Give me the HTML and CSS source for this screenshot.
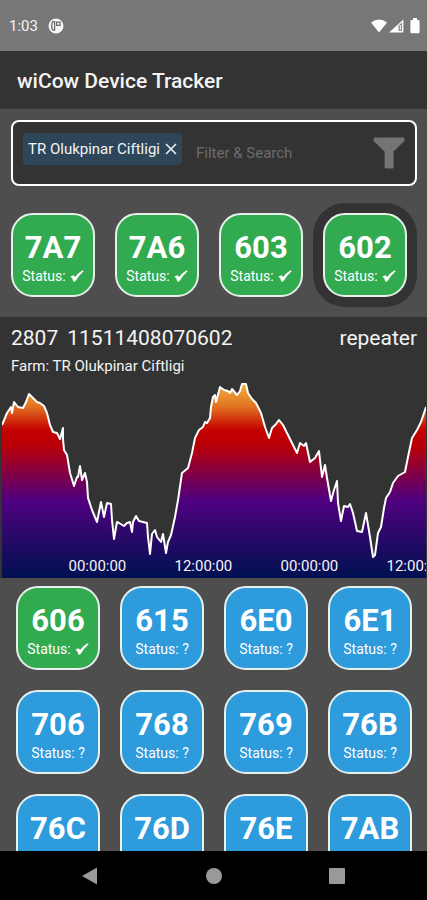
FILE: index.html
```html
<!DOCTYPE html>
<html lang="en">
<head>
  <meta charset="UTF-8" />
  <meta name="viewport" content="width=device-width, initial-scale=1" />
  <title>wiCow Device Tracker</title>
  <link rel="stylesheet" href="styles.css">
</head>
<body>
  <!-- Shared check mark -->
  <svg class="defs" aria-hidden="true">
    <symbol id="check" viewBox="0 0 14 12">
      <path d="M.6 6.6Q2.2 5.2 3.6 5.4 4.6 5.8 5 7 8.4 2.6 12.6.2L13.6 1.2Q9.2 5 6 10.6 5 11.8 3.4 11.8 2.4 8 .6 6.6Z" fill="currentColor"/>
    </symbol>
  </svg>

  <!-- Phone status bar -->
  <div class="status-bar">
    <span class="clock">1:03</span>
    <svg class="app-icon" width="16" height="16" viewBox="0 0 16 16">
      <circle cx="8" cy="8" r="7.5" fill="#f5f5f5"/>
      <path d="M6.6 3.6H4.8Q3.6 5.5 3.6 8T5 12.2H6.6ZM8.6 4.2H12V7.4H8.6Z" fill="none" stroke="#6c6c6c" stroke-width="1.3"/>
    </svg>
    <div class="signals">
      <svg width="16" height="14" viewBox="0 0 16 14"><path d="M0 3.6Q8-2.6 16 3.6L8 13.6Z" fill="#fff"/></svg>
      <svg width="15" height="14" viewBox="0 0 15 14">
        <path d="M0 13.6 14.4.4V13.6Z" fill="#fff"/>
        <path d="M9.4 6.6 13 3.4V12H9.4Z" fill="#8c8c8c"/>
        <path d="M11.3 6V11" stroke="#fff"/>
      </svg>
      <svg class="battery" width="10" height="16" viewBox="0 0 10 16"><path d="M3 0H7V2H8.4Q9.6 2 9.6 3.2V14Q9.6 15.2 8.4 15.2H1.6Q.4 15.2.4 14V3.2Q.4 2 1.6 2H3Z" fill="#fff"/></svg>
    </div>
  </div>

  <header class="title-bar">
    <h1>wiCow Device Tracker</h1>
  </header>

  <main>
    <div class="search">
      <button class="chip" type="button" aria-label="Remove TR Olukpinar Ciftligi">
        TR Olukpinar Ciftligi
        <svg width="12" height="12" viewBox="0 0 12 12"><path d="M1 1 11 11M11 1 1 11" stroke="currentColor" stroke-width="1.5"/></svg>
      </button>
      <input type="text" placeholder="Filter &amp; Search" aria-label="Filter and search">
      <button class="filter" type="button" aria-label="Filter">
        <svg width="32" height="32" viewBox="0 0 32 32"><path d="M.6 1.6Q.6.6 1.6.6H30.4Q31.4.6 31.4 1.6V4L20.6 14.6V30.4Q20.6 31.4 19.6 31.4H12.6Q11.6 31.4 11.6 30.4V14.6L.6 4Z" fill="#747474"/></svg>
      </button>
    </div>

    <div class="devices nearby">
      <button class="device ok"><b>7A7</b><span>Status: <svg><use href="#check"/></svg></span></button>
      <button class="device ok"><b>7A6</b><span>Status: <svg><use href="#check"/></svg></span></button>
      <button class="device ok"><b>603</b><span>Status: <svg><use href="#check"/></svg></span></button>
      <button class="device ok selected"><b>602</b><span>Status: <svg><use href="#check"/></svg></span></button>
    </div>

    <!-- Selected device -->
    <section class="detail">
      <div class="detail-head">
        <span>2807</span>
        <span>11511408070602</span>
        <span class="role">repeater</span>
      </div>
      <div class="farm">Farm: TR Olukpinar Ciftligi</div>
      <div class="chart">
        <svg class="plot" viewBox="0 0 424 200" preserveAspectRatio="none">
          <defs>
            <linearGradient id="heat" gradientUnits="userSpaceOnUse" x1="0" y1="0" x2="0" y2="200">
              <stop offset="0.03" stop-color="#f0b040"/>
              <stop offset="0.14" stop-color="#e27522"/>
              <stop offset="0.26" stop-color="#c40000"/>
              <stop offset="0.34" stop-color="#b80008"/>
              <stop offset="0.61" stop-color="#500080"/>
              <stop offset="0.82" stop-color="#240a66"/>
              <stop offset="1" stop-color="#001050"/>
            </linearGradient>
          </defs>
          <path class="area" fill="url(#heat)"/>
          <path class="line"/>
        </svg>
        <div class="hours">
          <span>00:00:00</span>
          <span>12:00:00</span>
          <span>00:00:00</span>
          <span>12:00:00</span>
        </div>
      </div>
    </section>

    <div class="devices all">
      <button class="device ok"><b>606</b><span>Status: <svg><use href="#check"/></svg></span></button>
      <button class="device"><b>615</b><span>Status: ?</span></button>
      <button class="device"><b>6E0</b><span>Status: ?</span></button>
      <button class="device"><b>6E1</b><span>Status: ?</span></button>
      <button class="device"><b>706</b><span>Status: ?</span></button>
      <button class="device"><b>768</b><span>Status: ?</span></button>
      <button class="device"><b>769</b><span>Status: ?</span></button>
      <button class="device"><b>76B</b><span>Status: ?</span></button>
      <button class="device"><b>76C</b><span>Status: ?</span></button>
      <button class="device"><b>76D</b><span>Status: ?</span></button>
      <button class="device"><b>76E</b><span>Status: ?</span></button>
      <button class="device"><b>7AB</b><span>Status: ?</span></button>
    </div>
  </main>

  <!-- Phone navigation -->
  <nav class="nav-bar">
    <button type="button" aria-label="Back"><svg width="18" height="18" viewBox="0 0 18 18"><path d="M0 9 15 .6V17.4Z"/></svg></button>
    <button type="button" aria-label="Home"><svg width="18" height="18" viewBox="0 0 18 18"><circle cx="9" cy="9" r="8"/></svg></button>
    <button type="button" aria-label="Recent apps"><svg width="18" height="18" viewBox="0 0 18 18"><rect x="1" y="1" width="16" height="16" rx="1"/></svg></button>
  </nav>

  <script>
    // Samples as x,y pairs
    const samples = `0,47 5,35 9,29 10,35 12,24 16,29 21,30 24,24 27,16 31,20 35,24 38,25 42,28 45,35 48,47
      51,54 55,55 58,61 61,50 61,61 62,72 65,77 68,95 72,108 75,99 76,99 78,88 80,102 83,95 85,104 86,120
      90,132 95,144 97,134 99,124 102,139 105,125 109,126 110,142 112,161 115,144 117,145 122,148 125,145
      128,144 130,154 131,144 134,138 137,143 145,145 146,159 148,176 150,156 153,152 155,159 159,164
      161,156 164,175 166,164 169,157 173,139 176,122 180,95 186,90 190,75 193,60 197,52 201,49 203,44
      205,45 208,40 209,29 211,19 213,17 214,24 218,9 222,12 226,13 228,15 230,11 235,17 238,13 240,6
      244,6 246,15 250,21 254,25 259,35 263,49 267,60 270,50 274,46 277,42 281,47 285,55 289,63 295,75
      298,65 302,68 304,65 308,84 313,80 317,73 320,99 323,87 325,100 329,123 332,112 335,103 336,125
      339,143 342,128 346,129 348,126 351,135 355,153 360,154 364,135 368,159 371,179 373,177 376,155
      379,149 382,130 384,120 388,114 391,105 396,98 403,94 406,79 410,60 415,52 419,44 424,29`
      .trim().split(/\s+/);
    const line = 'M' + samples.join('L');
    document.querySelector('.line').setAttribute('d', line);
    document.querySelector('.area').setAttribute('d', line + 'V200H0Z');
  </script>
</body>
</html>
```
FILE: styles.css
```css
:root {
  --bg: #4e4e4e;
  --panel: #333;
  --green: #32ab50;
  --blue: #2d9bdc;
  --text: #f4f4f4;
}

* { box-sizing: border-box; margin: 0; padding: 0; }

body {
  height: 100vh;
  display: flex;
  flex-direction: column;
  overflow: hidden;
  background: var(--bg);
  color: var(--text);
  font-family: Roboto, sans-serif;
}

button {
  border: 0;
  background: none;
  color: inherit;
  font-family: inherit;
  cursor: pointer;
}

svg { display: block; flex: none; }
.defs { position: absolute; width: 0; height: 0; }

/* Status bar */
.status-bar {
  flex: none;
  display: flex;
  align-items: center;
  height: 51px;
  padding: 1px 7px 0 9px;
  background: #777;
  font-size: 15px;
}
.app-icon { margin-left: 10px; }
.signals {
  display: flex;
  align-items: center;
  gap: 2px;
  margin-left: auto;
}
.battery { margin-left: 4px; }

/* Title */
.title-bar {
  flex: none;
  padding: 18px 17px 16px;
  background: var(--panel);
}
.title-bar h1 {
  font-size: 21px;
  font-weight: 500;
  line-height: 24px;
}

main {
  flex: 1;
  min-height: 0;
  overflow: hidden;
}

/* Search box */
.search {
  display: flex;
  align-items: center;
  height: 66px;
  margin: 11px 10px 0 11px;
  padding: 0 10px;
  border: 2px solid #fff;
  border-radius: 8px;
  background: var(--panel);
}
.chip {
  display: flex;
  align-items: center;
  gap: 5px;
  height: 32px;
  margin-bottom: 8px;
  padding: 0 5px;
  border-radius: 4px;
  background: #2d465a;
  font-size: 15px;
  white-space: nowrap;
}
.search input {
  flex: 1;
  min-width: 0;
  margin-left: 14px;
  border: 0;
  outline: 0;
  background: none;
  color: var(--text);
  font: 15px Roboto, sans-serif;
}
.search input::placeholder { color: #6c6c6c; }

/* Device tiles */
.devices {
  display: grid;
  grid-template-columns: repeat(auto-fill, 84px);
  gap: 20px;
}
.nearby { padding: 27px 11px 20px; }
.all { padding: 8px 15px 0 16px; }
.device {
  height: 84px;
  padding-top: 10px;
  border: 2px solid #e8f0ec;
  border-radius: 22px;
  background: var(--blue);
  color: #fff;
}
.device.ok { background: var(--green); }
.device.selected { box-shadow: 0 0 0 10px var(--panel); }
.device b {
  display: block;
  font-size: 31px;
  line-height: 32px;
}
.device span {
  display: flex;
  align-items: center;
  justify-content: center;
  gap: 4px;
  font-size: 14px;
  line-height: 24px;
}
.device svg {
  width: 14px;
  height: 12px;
}

/* Selected device */
.detail { background: var(--panel); }
.detail-head {
  display: flex;
  gap: 9px;
  padding: 8px 10px 0 11px;
  font-size: 21px;
  line-height: 26px;
}
.role { margin-left: auto; }
.farm {
  padding: 5px 11px 0;
  font-size: 15px;
  line-height: 20px;
}
.chart {
  position: relative;
  height: 200px;
  margin: 2px 1px 0 2px;
  overflow: hidden;
}
.plot {
  width: 100%;
  height: 100%;
}
.line {
  fill: none;
  stroke: #fff;
  stroke-width: 2;
  stroke-linejoin: round;
}

/* Hour labels over the plot */
.hours {
  position: absolute;
  left: 10%;
  bottom: 2px;
  display: flex;
  width: 100%;
  font-size: 15px;
  line-height: 20px;
}
.hours span {
  width: 25%;
  text-align: center;
}

/* Phone navigation */
.nav-bar {
  flex: none;
  display: flex;
  justify-content: center;
  gap: 105px;
  height: 49px;
  background: #000;
}
.nav-bar svg { fill: #999; }
```
